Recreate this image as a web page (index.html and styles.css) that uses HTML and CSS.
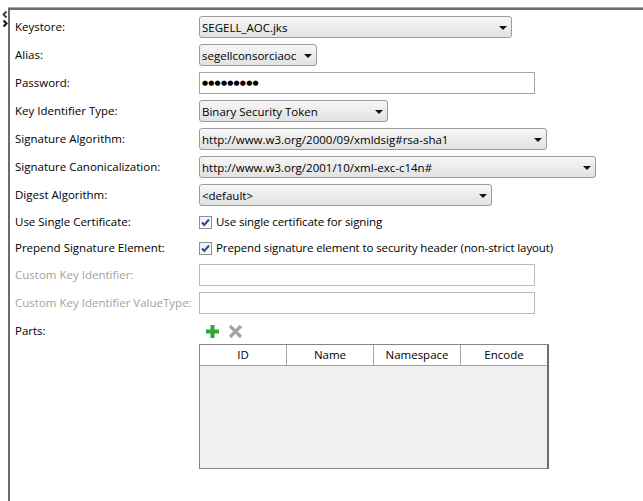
FILE: index.html
```html
<!DOCTYPE html>
<html>
<head>
<meta charset="utf-8">
<link rel="stylesheet" href="styles.css">
</head>
<body>
<div class="page">
  <div class="gutter">
    <svg width="8" height="20" viewBox="0 0 8 20">
      <path d="M6.5 1.5 L3.5 4.5 L6.5 7.5" fill="none" stroke="#3a3a3a" stroke-width="1.8"/>
      <path d="M3.5 10.5 L6.5 13.5 L3.5 16.5" fill="none" stroke="#111" stroke-width="2"/>
    </svg>
  </div>
  <div class="frame">
    <div class="form">
      <div class="label">Keystore:</div>
      <div class="field"><div class="select w-keystore"><span>SEGELL_AOC.jks</span><i class="arrow"></i></div></div>

      <div class="label">Alias:</div>
      <div class="field"><div class="select w-alias"><span>segellconsorciaoc</span><i class="arrow"></i></div></div>

      <div class="label">Password:</div>
      <div class="field"><div class="input w-wide"><span class="dots">●●●●●●●●●</span></div></div>

      <div class="label">Key Identifier Type:</div>
      <div class="field"><div class="select w-keyid"><span>Binary Security Token</span><i class="arrow"></i></div></div>

      <div class="label">Signature Algorithm:</div>
      <div class="field"><div class="select w-sigalg"><span>http://www.w3.org/2000/09/xmldsig#rsa-sha1</span><i class="arrow"></i></div></div>

      <div class="label">Signature Canonicalization:</div>
      <div class="field"><div class="select w-canon"><span>http://www.w3.org/2001/10/xml-exc-c14n#</span><i class="arrow"></i></div></div>

      <div class="label">Digest Algorithm:</div>
      <div class="field"><div class="select w-digest"><span>&lt;default&gt;</span><i class="arrow"></i></div></div>

      <div class="label check-row">Use Single Certificate:</div>
      <div class="field check-row">
        <span class="checkbox"><svg width="11" height="11" viewBox="0 0 11 11"><path d="M2 5.5 L4.3 8 L9 2.5" fill="none" stroke="#2d4a8d" stroke-width="2"/></svg></span>
        <span class="check-text">Use single certificate for signing</span>
      </div>

      <div class="label check-row">Prepend Signature Element:</div>
      <div class="field check-row">
        <span class="checkbox"><svg width="11" height="11" viewBox="0 0 11 11"><path d="M2 5.5 L4.3 8 L9 2.5" fill="none" stroke="#2d4a8d" stroke-width="2"/></svg></span>
        <span class="check-text">Prepend signature element to security header (non-strict layout)</span>
      </div>

      <div class="label disabled">Custom Key Identifier:</div>
      <div class="field"><div class="input disabled-input w-wide"></div></div>

      <div class="label disabled">Custom Key Identifier ValueType:</div>
      <div class="field"><div class="input disabled-input w-wide"></div></div>

      <div class="label parts-label">Parts:</div>
      <div class="parts">
        <div class="toolbar">
          <svg class="icon" width="15" height="15" viewBox="0 0 15 15">
            <path d="M7.5 1 V14 M1 7.5 H14" stroke="#2fa53a" stroke-width="4" fill="none"/>
          </svg>
          <svg class="icon" width="15" height="15" viewBox="0 0 15 15">
            <path d="M2 2 L13 13 M13 2 L2 13" stroke="#a4a4a4" stroke-width="3.2" fill="none"/>
          </svg>
        </div>
        <div class="table">
          <div class="thead">
            <div class="th">ID</div>
            <div class="th">Name</div>
            <div class="th">Namespace</div>
            <div class="th">Encode</div>
          </div>
          <div class="tbody"></div>
        </div>
      </div>
    </div>
  </div>
</div>
</body>
</html>
```

FILE: styles.css
```css
html, body {
  margin: 0;
  padding: 0;
  background: #ffffff;
}

body {
  font-family: "Open Sans", "Noto Sans", sans-serif;
  font-size: 11.5px;
  color: #000;
}

.page {
  display: flex;
  height: 100vh;
  box-sizing: border-box;
}

.gutter {
  width: 8px;
  padding-top: 10px;
  flex: none;
}

.gutter svg {
  display: block;
}

.frame {
  flex: 1;
  margin-top: 8px;
  border-top: 2px solid #6c6c6c;
  border-left: 2px solid #6c6c6c;
  box-shadow: 0 -1px 0 #a8a8a8;
  padding: 6px 0 0 5px;
}

.form {
  display: grid;
  grid-template-columns: 184px 1fr;
  row-gap: 6px;
}

.label {
  height: 22px;
  line-height: 22px;
  white-space: nowrap;
}

.label.disabled {
  color: #a2a2a2;
}

.field {
  height: 22px;
  display: flex;
  align-items: center;
}

.check-row {
  height: 20px;
  line-height: 20px;
}

.select {
  box-sizing: border-box;
  height: 22px;
  border: 1px solid #9b9b9b;
  border-radius: 3px;
  background: linear-gradient(#f7f7f7, #ececec 50%, #e2e2e2);
  display: flex;
  align-items: center;
  justify-content: space-between;
  padding: 0 4px 0 2px;
  white-space: nowrap;
}

.arrow {
  width: 0;
  height: 0;
  border-left: 4px solid transparent;
  border-right: 4px solid transparent;
  border-top: 4px solid #111;
  margin-top: 1px;
}

.input {
  box-sizing: border-box;
  height: 22px;
  border: 1px solid #a6a6a6;
  background: #fff;
  display: flex;
  align-items: center;
  padding: 0 2px;
}

.disabled-input {
  border-color: #b9b9b9;
}

.dots {
  font-family: "DejaVu Sans", sans-serif;
  font-size: 7px;
  letter-spacing: 0.2px;
}

.w-keystore { width: 313px; }
.w-alias { width: 118px; }
.w-wide { width: 336px; }
.w-keyid { width: 189px; }
.w-sigalg { width: 348px; }
.w-canon { width: 397px; }
.w-digest { width: 293px; }

.checkbox {
  box-sizing: border-box;
  width: 13px;
  height: 13px;
  border: 1px solid #8e8f8f;
  background: linear-gradient(135deg, #f0f0f0, #ffffff);
  display: flex;
  align-items: center;
  justify-content: center;
  flex: none;
}

.checkbox svg {
  display: block;
}

.check-text {
  margin-left: 4px;
  white-space: nowrap;
  letter-spacing: -0.1px;
}

.parts-label {
  align-self: start;
}

.parts {
  display: flex;
  flex-direction: column;
}

.toolbar {
  height: 22px;
  display: flex;
  align-items: center;
  gap: 8px;
  padding-left: 6px;
}

.icon {
  display: block;
}

.table {
  margin-top: 2px;
  width: 350px;
  height: 125px;
  box-sizing: border-box;
  border: 1px solid #858585;
  border-right: 2px solid #6e6e6e;
  background: #f0f0f0;
  display: flex;
  flex-direction: column;
}

.thead {
  display: grid;
  grid-template-columns: 87px 87px 87px 1fr;
  height: 20px;
  background: #fff;
  border-bottom: 1px solid #a0a0a0;
}

.th {
  text-align: center;
  line-height: 20px;
  border-right: 1px solid #a8a8a8;
}

.th:last-child {
  border-right: none;
}

.tbody {
  flex: 1;
}
```
